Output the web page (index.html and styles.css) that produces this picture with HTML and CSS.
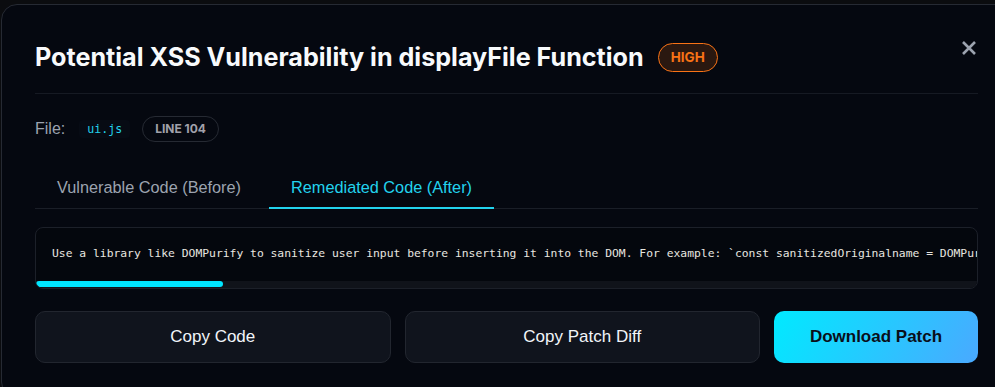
FILE: index.html
```html
<!DOCTYPE html>
<html lang="en">
<head>
<meta charset="utf-8">
<title>Vulnerability Details</title>
<link rel="stylesheet" href="styles.css">
</head>
<body>
<div class="modal">
  <button class="close" aria-label="Close">
    <svg width="16" height="16" viewBox="0 0 16 16"><path d="M2 2 L14 14 M14 2 L2 14" stroke="#9ca3af" stroke-width="2.6" stroke-linecap="butt" fill="none"/></svg>
  </button>
  <div class="header">
    <h2 class="title">Potential XSS Vulnerability in displayFile Function</h2>
    <span class="sev">HIGH</span>
  </div>
  <div class="file-row">
    <span class="file-label">File:</span>
    <code class="file-name">ui.js</code>
    <span class="line-badge">LINE 104</span>
  </div>
  <div class="tabs">
    <div class="tab">Vulnerable Code (Before)</div>
    <div class="tab active">Remediated Code (After)</div>
  </div>
  <div class="code-box">
    <pre class="code">Use a library like DOMPurify to sanitize user input before inserting it into the DOM. For example: `const sanitizedOriginalname = DOMPurify.sanitize(originalname);`</pre>
    <div class="scroll-track"><div class="scroll-thumb"></div></div>
  </div>
  <div class="actions">
    <button class="btn">Copy Code</button>
    <button class="btn">Copy Patch Diff</button>
    <button class="btn primary">Download Patch</button>
  </div>
</div>
</body>
</html>
```
FILE: styles.css
```css
html, body {
  margin: 0;
  padding: 0;
  background: #0b0c0f;
  overflow: hidden;
}
body {
  padding: 4px 0 0 1px;
  font-family: "Liberation Sans", Arial, sans-serif;
}
.modal {
  position: relative;
  width: 1011px;
  box-sizing: border-box;
  background: #050810;
  border: 1px solid #262a33;
  border-radius: 16px;
  padding: 36px 33px 34px;
}
.close {
  position: absolute;
  top: 34px;
  left: 958px;
  width: 18px;
  height: 18px;
  padding: 1px;
  border: 0;
  background: none;
  cursor: pointer;
}
.close svg { display: block; }
.header {
  display: flex;
  align-items: center;
  height: 32px;
  padding-bottom: 20px;
  border-bottom: 1px solid #161a23;
}
.title {
  margin: 0;
  font-family: Inter, "Liberation Sans", sans-serif;
  font-weight: 700;
  font-size: 25.15px;
  line-height: 32px;
  color: #f8fafc;
}
.sev {
  margin-left: 14px;
  height: 27px;
  line-height: 27px;
  padding: 0 12px;
  border: 1px solid #f97316;
  border-radius: 999px;
  background: #2a1810;
  color: #f97316;
  font-family: Inter, sans-serif;
  font-weight: 700;
  font-size: 13.5px;
}
.file-row {
  display: flex;
  align-items: center;
  margin-top: 22px;
  height: 26px;
}
.file-label {
  color: #9ca3af;
  font-size: 16px;
}
.file-name {
  margin-left: 14px;
  padding: 2px 8px;
  border-radius: 4px;
  background: #070b14;
  color: #22d3ee;
  font-family: "DejaVu Sans Mono", monospace;
  font-size: 11.6px;
}
.line-badge {
  margin-left: 12px;
  height: 24px;
  line-height: 24px;
  padding: 0 12px;
  border: 1px solid #262a33;
  border-radius: 999px;
  color: #a1a1aa;
  font-family: Inter, sans-serif;
  font-weight: 700;
  font-size: 12px;
}
.tabs {
  display: flex;
  gap: 6px;
  margin-top: 25px;
  border-bottom: 1px solid #1a1e27;
}
.tab {
  padding: 10px 22px 10px;
  line-height: 20px;
  font-size: 16.3px;
  color: #9ca3af;
  border-bottom: 2px solid transparent;
  margin-bottom: -1px;
}
.tab.active {
  color: #22d3ee;
  border-bottom-color: #22d3ee;
}
.code-box {
  margin-top: 18px;
  border: 1px solid #1c2029;
  border-radius: 8px;
  background: #04070d;
  overflow: hidden;
}
.code {
  margin: 0;
  padding: 17px 16px 20px;
  font-family: "DejaVu Sans Mono", monospace;
  font-size: 11.35px;
  line-height: 16px;
  color: #e8e6e0;
  white-space: pre;
  overflow: hidden;
}
.scroll-track {
  height: 7px;
  background: #10131a;
}
.scroll-thumb {
  width: 187px;
  height: 6px;
  background: #00e5ff;
  border-radius: 4px;
}
.actions {
  display: grid;
  grid-template-columns: 1fr 1fr 204px;
  gap: 14px;
  margin-top: 22px;
}
.btn {
  height: 52px;
  border: 1px solid #22262f;
  border-radius: 10px;
  background: #10141d;
  color: #f1f5f9;
  font-family: "Liberation Sans", Arial, sans-serif;
  font-size: 17px;
  cursor: pointer;
}
.btn.primary {
  border: 0;
  background: linear-gradient(120deg, #00eaff 0%, #4aa9ff 100%);
  color: #0a0f1a;
  font-weight: 700;
}
```
